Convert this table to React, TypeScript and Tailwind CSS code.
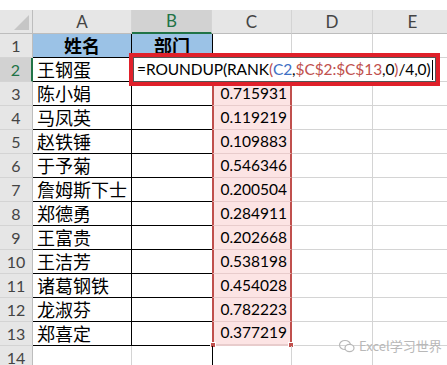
import React from 'react';

const names = ['王钢蛋', '陈小娟', '马凤英', '赵铁锤', '于予菊', '詹姆斯下士', '郑德勇', '王富贵', '王洁芳', '诸葛钢铁', '龙淑芬', '郑喜定'];
const values = ['', '0.715931', '0.119219', '0.109883', '0.546346', '0.200504', '0.284911', '0.202668', '0.538198', '0.454028', '0.782223', '0.377219'];

const cjk = { fontFamily: '"Noto Sans CJK SC", sans-serif' };
const latin = { fontFamily: 'Lato, "Noto Sans CJK SC", sans-serif' };

const ColHead = ({ label, active, w }: { label: string; active?: boolean; w: string }) => (
  <div
    className={`${w} h-[24px] shrink-0 flex items-center justify-center text-[17px] border-r border-[#d4d4d4] ${
      active ? 'bg-[#d2d2d2] text-[#217346] border-b-2 border-b-[#217346]' : 'bg-[#e6e6e6] text-[#444] border-b border-b-[#bdbdbd]'
    }`}
    style={latin}
  >
    {label}
  </div>
);

const App = () => {
  return (
    <div className="w-[447px] h-[365px] overflow-hidden bg-white relative pt-[10px]">
      {/* column headers */}
      <div className="flex">
        <div className="w-[33px] h-[24px] shrink-0 bg-[#e6e6e6] border-r border-b border-[#bdbdbd] relative">
          <div className="absolute right-[3px] bottom-[3px] w-0 h-0 border-l-[15px] border-l-transparent border-b-[15px] border-b-[#c6c6c6]" />
        </div>
        <ColHead label="A" w="w-[99px]" />
        <ColHead label="B" w="w-[80px]" active />
        <ColHead label="C" w="w-[80px]" />
        <ColHead label="D" w="w-[81px]" />
        <ColHead label="E" w="w-[80px]" />
      </div>

      {/* rows */}
      {Array.from({ length: 14 }).map((_, i) => {
        const row = i + 1;
        const active = row === 2;
        const inTable = row <= 13;
        const inRange = row >= 2 && row <= 13;
        return (
          <div key={row} className="flex h-[24px]">
            <div
              className={`w-[33px] shrink-0 flex items-center justify-center text-[16px] border-b border-[#d4d4d4] ${
                active ? 'bg-[#d2d2d2] text-[#217346] border-r-2 border-r-[#217346]' : 'bg-[#e6e6e6] text-[#444] border-r border-r-[#bdbdbd]'
              }`}
              style={latin}
            >
              {row}
            </div>
            <div
              className={`w-[99px] shrink-0 flex items-center text-[18px] text-black ${
                row === 1 ? 'justify-center font-bold bg-[#9bc2e6]' : 'pl-[4px]'
              } ${inTable ? 'border-r border-b border-black' : 'border-r border-b border-[#d4d4d4]'}`}
              style={cjk}
            >
              {row === 1 ? '姓名' : names[row - 2] ?? ''}
            </div>
            <div
              className={`w-[80px] shrink-0 flex items-center justify-center text-[18px] font-bold text-black ${
                row === 1 ? 'bg-[#9bc2e6]' : ''
              } ${inTable ? 'border-b border-black' : 'border-b border-[#d4d4d4]'}`}
              style={cjk}
            >
              {row === 1 ? '部门' : ''}
            </div>
            <div
              className={`w-[80px] shrink-0 flex items-center justify-end pr-[3px] text-[15.5px] text-black relative ${
                inRange ? 'bg-[#fce4e4] border-l-2 border-r-2 border-l-[#c0504d] border-r-[#c0504d] border-b border-b-[#e8cccc]' : 'border-l border-l-black border-r border-r-[#d4d4d4] border-b border-b-[#d4d4d4]'
              } ${row === 13 ? 'border-b-2 border-b-[#c0504d]' : ''} ${row === 14 ? 'border-l-[#d4d4d4]' : ''}`}
              style={latin}
            >
              {inRange ? values[row - 2] : ''}
              {row === 13 && (
                <>
                  <div className="absolute left-[-4px] bottom-[-4px] w-[6px] h-[6px] bg-[#c0504d] border border-white" />
                  <div className="absolute right-[-4px] bottom-[-4px] w-[6px] h-[6px] bg-[#c0504d] border border-white" />
                </>
              )}
            </div>
            <div className="w-[81px] shrink-0 border-r border-b border-[#d4d4d4]" />
            <div className="w-[80px] shrink-0 border-r border-b border-[#d4d4d4]" />
          </div>
        );
      })}

      {/* formula being edited in B2, with red annotation box */}
      <div className="absolute left-[129px] top-[53px] w-[311px] h-[33px] border-[4px] border-[#e0202a]">
        <div className="w-full h-full bg-white border border-[#555] flex items-center pl-[3px] text-[15.5px] tracking-[-0.1px] text-black whitespace-nowrap" style={latin}>
          <span>=ROUNDUP(RANK</span>
          <span className="text-[#c0504d]">(</span>
          <span className="text-[#3e6fc4]">C2</span>
          <span>,</span>
          <span className="text-[#c0504d]">$C$2:$C$13</span>
          <span>,0</span>
          <span className="text-[#c0504d]">)</span>
          <span>/4,0)</span>
          <span className="ml-[1px] w-px h-[20px] bg-black" />
        </div>
      </div>

      {/* watermark */}
      <div className="absolute left-[338px] top-[336px] flex items-center gap-[3px] text-[#b8b8b8] text-[13px]" style={cjk}>
        <svg width="18" height="16" viewBox="0 0 18 16" fill="none" stroke="#b8b8b8" strokeWidth="1.2">
          <ellipse cx="7" cy="7" rx="5.5" ry="4.5" />
          <ellipse cx="11.5" cy="10" rx="4.5" ry="3.6" fill="white" />
        </svg>
        <span>Excel学习世界</span>
      </div>
    </div>
  );
};

export default App;
